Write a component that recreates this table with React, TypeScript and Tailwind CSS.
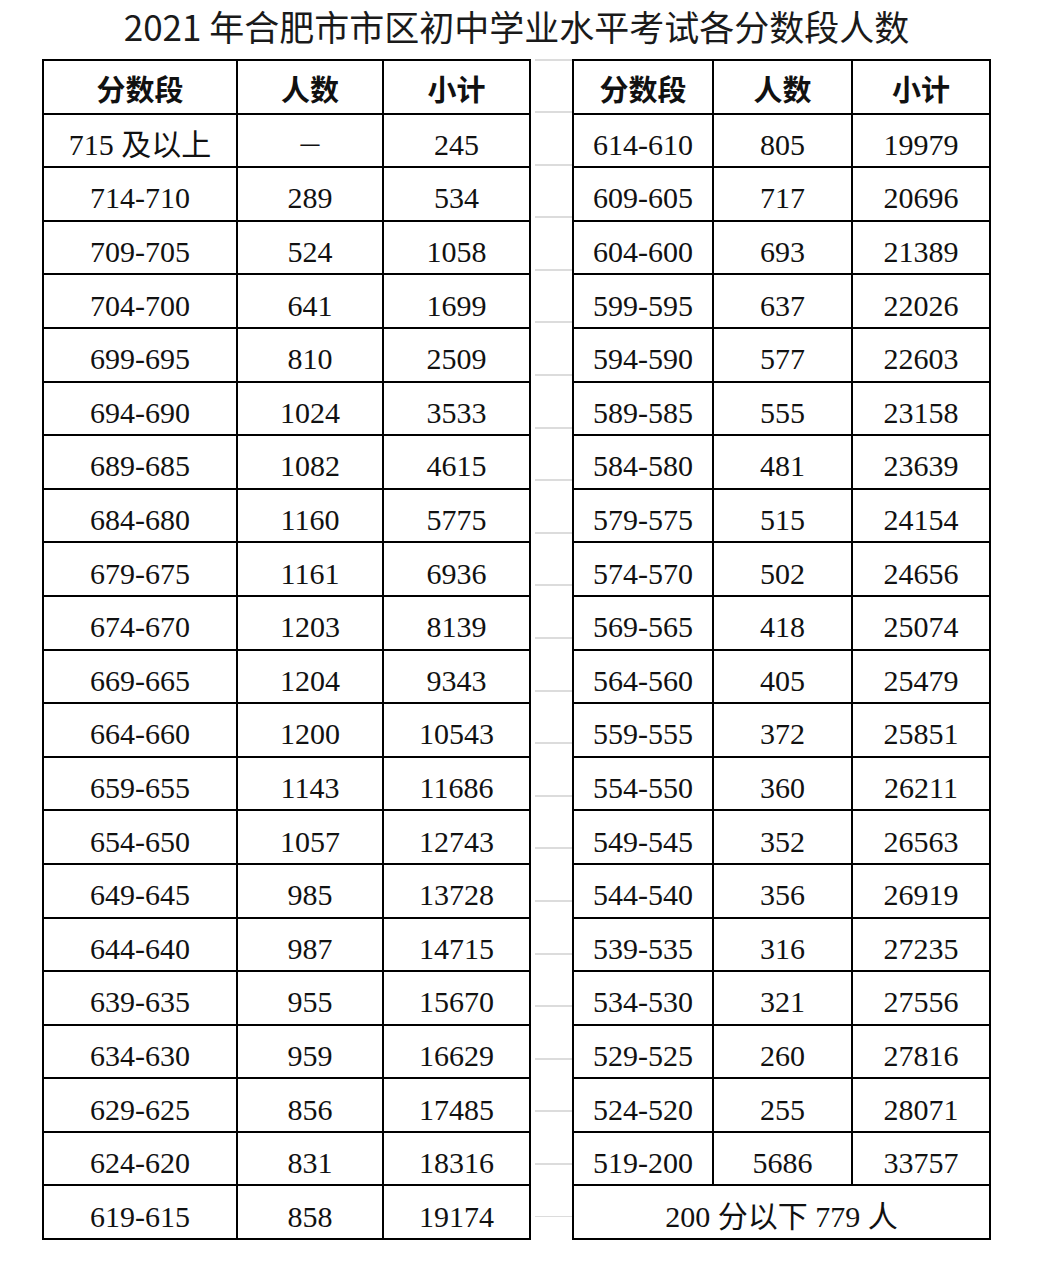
import React from "react";

const leftRows: [string, string, string][] = [
  ["715 及以上", "—", "245"],
  ["714-710", "289", "534"],
  ["709-705", "524", "1058"],
  ["704-700", "641", "1699"],
  ["699-695", "810", "2509"],
  ["694-690", "1024", "3533"],
  ["689-685", "1082", "4615"],
  ["684-680", "1160", "5775"],
  ["679-675", "1161", "6936"],
  ["674-670", "1203", "8139"],
  ["669-665", "1204", "9343"],
  ["664-660", "1200", "10543"],
  ["659-655", "1143", "11686"],
  ["654-650", "1057", "12743"],
  ["649-645", "985", "13728"],
  ["644-640", "987", "14715"],
  ["639-635", "955", "15670"],
  ["634-630", "959", "16629"],
  ["629-625", "856", "17485"],
  ["624-620", "831", "18316"],
  ["619-615", "858", "19174"],
];

const rightRows: [string, string, string][] = [
  ["614-610", "805", "19979"],
  ["609-605", "717", "20696"],
  ["604-600", "693", "21389"],
  ["599-595", "637", "22026"],
  ["594-590", "577", "22603"],
  ["589-585", "555", "23158"],
  ["584-580", "481", "23639"],
  ["579-575", "515", "24154"],
  ["574-570", "502", "24656"],
  ["569-565", "418", "25074"],
  ["564-560", "405", "25479"],
  ["559-555", "372", "25851"],
  ["554-550", "360", "26211"],
  ["549-545", "352", "26563"],
  ["544-540", "356", "26919"],
  ["539-535", "316", "27235"],
  ["534-530", "321", "27556"],
  ["529-525", "260", "27816"],
  ["524-520", "255", "28071"],
  ["519-200", "5686", "33757"],
];

const headers = ["分数段", "人数", "小计"];

const bodyFont =
  "font-['Liberation_Serif','Noto_Sans_CJK_SC',serif] text-[30px] text-[#111]";
const headFont =
  "font-['Noto_Sans_CJK_SC',sans-serif] font-bold text-[29px] text-[#111]";

function HeadCell({ text }: { text: string }) {
  return (
    <div className={`bg-white flex items-center justify-center pt-[4px] ${headFont}`}>
      {text}
    </div>
  );
}

function Cell({ text }: { text: string }) {
  return (
    <div className={`bg-white flex items-center justify-center pt-[9px] leading-none ${bodyFont}`}>
      {text === "—" ? (
        <span className="font-['Noto_Sans_CJK_SC',sans-serif] text-[24px] pb-[6px]">—</span>
      ) : (
        text
      )}
    </div>
  );
}

export default function App() {
  return (
    <div className="w-[1040px] h-[1264px] bg-white">
      <div className="pl-[42px] w-[991px]">
        <div className="h-[59px] flex items-center justify-center pb-[8px] font-['Noto_Sans_CJK_SC',sans-serif] text-[35px] text-[#1a1a1a] leading-none">
          2021 年合肥市市区初中学业水平考试各分数段人数
        </div>
        <div className="flex">
          <div className="grid grid-cols-[192px_144px_145px] grid-rows-[repeat(22,51.6px)] gap-[2px] p-[2px] bg-black">
            {headers.map((h) => (
              <HeadCell key={"l" + h} text={h} />
            ))}
            {leftRows.map((r, i) =>
              r.map((c, j) => <Cell key={`l${i}-${j}`} text={c} />)
            )}
          </div>
          <div className="w-[41px] pl-[4px]">
            <div className="grid grid-rows-[repeat(22,51.6px)] gap-[1px] py-[1px] bg-[#dcdcdc]">
              {Array.from({ length: 22 }).map((_, i) => (
                <div key={i} className="bg-white mt-[0.5px] mb-[0.5px]" />
              ))}
            </div>
          </div>
          <div className="grid grid-cols-[138px_137px_136px] grid-rows-[repeat(22,51.6px)] gap-[2px] p-[2px] bg-black">
            {headers.map((h) => (
              <HeadCell key={"r" + h} text={h} />
            ))}
            {rightRows.map((r, i) =>
              r.map((c, j) => <Cell key={`r${i}-${j}`} text={c} />)
            )}
            <div className={`col-span-3 bg-white flex items-center justify-center pt-[9px] leading-none whitespace-pre ${bodyFont}`}>
              200 分以下 779 人
            </div>
          </div>
        </div>
      </div>
    </div>
  );
}
